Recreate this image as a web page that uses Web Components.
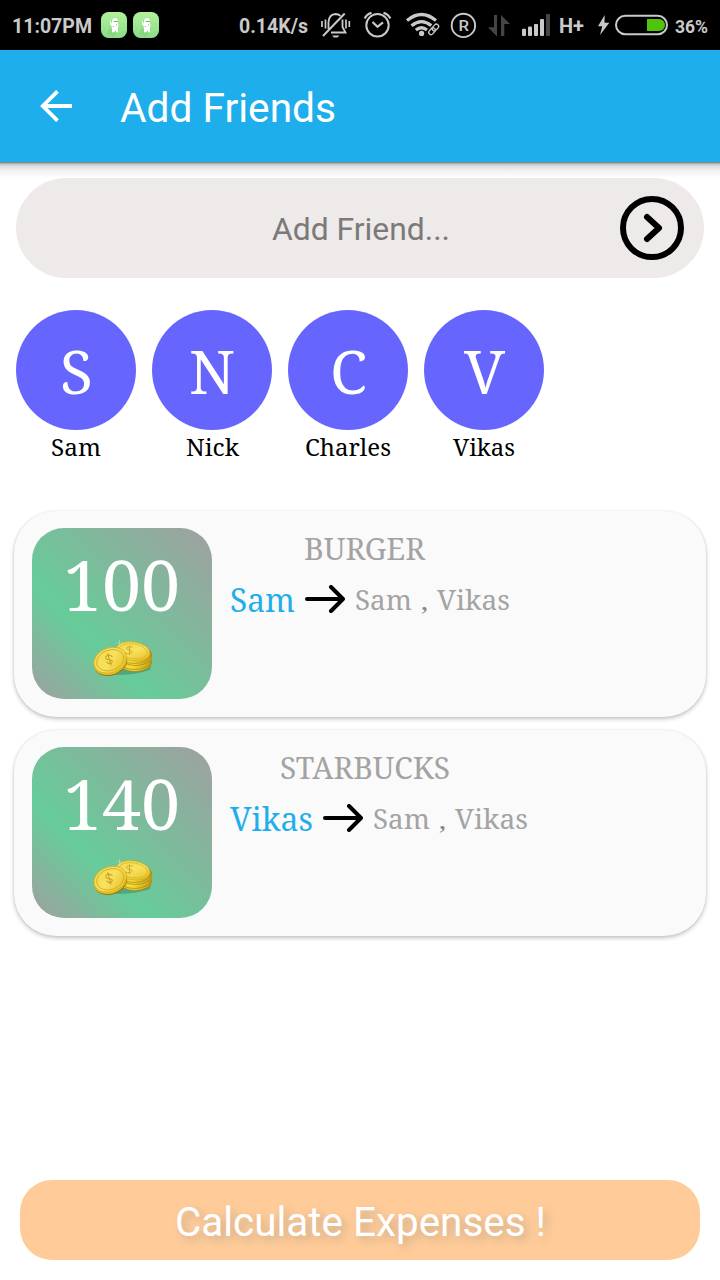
<!DOCTYPE html>
<html lang="en">
<head>
<meta charset="utf-8">
<title>Add Friends</title>
<style>
html,body{margin:0;padding:0;background:#fff}
body{width:720px;height:1280px;overflow:hidden;font-family:Roboto,sans-serif}
</style>
</head>
<body>
<expense-app></expense-app>
<script>
const define=(name,render)=>customElements.define(name,class extends HTMLElement{
  connectedCallback(){
    if(this.shadowRoot)return;
    this.attachShadow({mode:'open'}).innerHTML=render(k=>this.getAttribute(k)||'');
  }
});

/* One line of text set to a given advance width; "base" is the baseline from the top of the box. */
define('fit-text',a=>{
  const serif=a('face')==='serif';
  return `<style>:host{display:block;flex:none;width:${a('w')}px;height:${a('h')}px}svg{display:block;overflow:visible}
  text{font-family:${serif?'"Noto Serif","DejaVu Serif Condensed","DejaVu Serif",serif':'Roboto,sans-serif'};font-stretch:${serif?'condensed':'normal'};font-size:${a('size')}px;font-weight:${a('weight')||400};fill:currentColor}</style>
  <svg width="${a('w')}" height="${a('h')}"><text x="0" y="${a('base')}" textLength="${a('w')}" lengthAdjust="spacingAndGlyphs">${a('text')}</text></svg>`});

const ghost=x=>`<rect x="${x}" y="12" width="26" height="26" rx="7.5" fill="url(#g)"/>
<path d="M${x+9} 27L${x+13} 20L${x+17} 26L${x+16} 33L${x+12} 37L${x+6} 34Z" fill="#7fc777" opacity=".5"/>
<path d="M${x+11} 22v-1.500q.5-2.500 3-2.500q2.500 0 3 3v2.500q.8 1.500 0 3.500v5.300h-2v-1.500h-1.300v1.500h-2.700v-3.500q-.8-1-.5-3l-1.500-1.500v-3l1 .2v1.500h1z" fill="#fff"/>
<path d="M${x+12.500} 21.500h4.500M${x+12} 26.500h1M${x+15} 25h1" stroke="#72bd76" fill="none" stroke-width="1.100"/>`;

define('status-bar',()=>`<style>
:host{display:flex;height:50px;background:#000;color:#cacaca;padding-left:12px;box-sizing:border-box}
svg{display:block;flex:none}
</style>
<fit-text w="80" h="50" base="33" size="20" weight="700" text="11:07PM"></fit-text>
<svg width="147" height="50" viewBox="92 0 147 50"><defs><linearGradient id="g" x2="0" y2="1"><stop stop-color="#b5ef9b"/><stop offset="1" stop-color="#8ade88"/></linearGradient></defs>${ghost(101)}${ghost(133)}</svg>
<fit-text w="69" h="50" base="33" size="20" weight="700" text="0.14K/s"></fit-text>
<svg width="251" height="50" viewBox="308 0 251 50" fill="none" stroke="#cacaca" stroke-width="2">
 <path d="M328.500 29V22Q329 14.500 335.500 14Q338.500 14 340.500 15.800M342.500 19.500V27L345.500 32.500H331" stroke-width="1.800"/>
 <path d="M323 36L344.700 13.500" stroke-width="2"/><path d="M332 35.500h7.500l-2 2h-3.500z" fill="#cacaca" stroke="none"/>
 <path d="M322 21v6M325.500 19.500v9M346 19.500v9M349.300 21v6" stroke-width="1.700"/>
 <circle cx="377.500" cy="25.300" r="11.200"/><path d="M372.500 22l5 4.800l5.500-4.500" stroke-width="2.200"/>
 <path d="M364.700 18.500Q366.500 14.500 371.500 12.800M383.500 12.800Q388.500 14.500 390.300 18.500" stroke-width="2.200"/>
 <g stroke-width="3.200"><path d="M407 20.500Q421.500 8.500 436 20.500"/><path d="M411.500 25.700Q421.500 17.500 431.500 25.700"/><path d="M415.800 30Q421.500 25.500 427 30"/></g>
 <circle cx="421.600" cy="33.400" r="2.600" fill="#cacaca" stroke="none"/>
 <g transform="rotate(-48 433.500 29.500)" stroke="#000" stroke-width="4"><rect x="427.500" y="27.300" width="7.500" height="4.500" rx="2.200"/><rect x="432.500" y="27.300" width="7.500" height="4.500" rx="2.200"/></g>
 <g transform="rotate(-48 433.500 29.500)" stroke-width="1.300"><rect x="427.500" y="27.300" width="7.500" height="4.500" rx="2.200"/><rect x="432.500" y="27.300" width="7.500" height="4.500" rx="2.200"/></g>
 <circle cx="463.400" cy="25.400" r="11.700" stroke-width="1.900"/>
 <text x="458.500" y="31" textLength="10.500" lengthAdjust="spacingAndGlyphs" fill="#cacaca" stroke="none" font-family="Roboto,sans-serif" font-size="15.500" font-weight="500">R</text>
 <path d="M494 15h3v21.500L488 27.300h6zM501 36V15l9 9h-5.700v12z" fill="#454545" stroke="none"/>
 <g fill="#cacaca" stroke="none"><rect x="522" y="28.700" width="4" height="7.300" rx="1"/><rect x="528" y="26.500" width="4" height="9.500" rx="1"/><rect x="534" y="24" width="4" height="12" rx="1"/><rect x="540" y="19" width="4" height="17" rx="1"/><rect x="546" y="14" width="4" height="22" rx="1" fill="#454545"/></g>
</svg>
<fit-text w="25" h="50" base="33" size="20" weight="700" text="H+"></fit-text>
<svg width="91" height="50" viewBox="584 0 91 50"><path d="M604.700 15l-6.700 11.200h4.300l-2.300 8.800l9.300-12.200h-4.800z" fill="#cacaca"/><rect x="616" y="15.700" width="51" height="18.600" rx="9.300" fill="none" stroke="#cacaca" stroke-width="2"/><path d="M647 19h12a6 6 0 0 1 0 12h-12z" fill="#4fc40a"/></svg>
<fit-text w="33" h="50" base="32.500" size="19" weight="700" text="36%"></fit-text>`);

define('app-header',()=>`<style>
:host{display:flex;position:relative;height:112px;background:#1eaeec;color:#fff;padding-left:40px;box-sizing:border-box}
:host::after{content:"";position:absolute;left:0;right:0;top:112px;height:16px;background:linear-gradient(#777 0,#999 1px,#c4c4c4 2px,#dedede 4px,#f3f3f3 9px,#fff)}
svg{display:block;flex:none;margin:40px 48px 0 0}
</style>
<svg width="32" height="32" viewBox="40 90 32 32" fill="none" stroke="#fff" stroke-width="3.800"><path d="M72 106H43M57.500 91.300L42.800 106L57.500 120.700"/></svg>
<fit-text w="216" h="112" base="72" size="40" text="Add Friends"></fit-text>`);

define('friend-input',()=>`<style>
:host{display:flex;position:relative;height:100px;margin:16px 16px 0;border-radius:50px;background:#edeae9;color:#7b7979;padding-left:256px;box-sizing:border-box}
svg{display:block;flex:none;margin:18px 0 0 170px}
</style>
<fit-text w="178" h="100" base="62" size="32" text="Add Friend..."></fit-text>
<svg width="64" height="64" fill="none" stroke="#000" stroke-width="6"><circle cx="32" cy="32" r="29"/><path d="M27 21L39 32L27 43" stroke-linecap="round" stroke-linejoin="round"/></svg>`);

define('friend-avatar',a=>`<style>
:host{display:flex;flex-direction:column;align-items:center;width:120px}
div{display:flex;justify-content:center;width:120px;height:120px;border-radius:50%;background:#66f;color:#fff}
.name{color:#000}
</style>
<div><fit-text face="serif" w="${a('iw')}" h="120" base="84" size="60" text="${a('name')[0]}"></fit-text></div>
<fit-text class="name" face="serif" w="${a('nw')}" h="36" base="26" size="24" text="${a('name')}"></fit-text>`);

define('coin-stack',()=>`<style>:host{display:block;width:60px;height:36px}svg{display:block;overflow:visible}</style>
<svg width="60" height="36" viewBox="-1 1 60 36"><defs>
<linearGradient id="f" x2="1" y2="1"><stop stop-color="#f2d94a"/><stop offset=".5" stop-color="#f8e15e"/><stop offset="1" stop-color="#e3bb1d"/></linearGradient>
<linearGradient id="e"><stop stop-color="#e9c526"/><stop offset=".4" stop-color="#f4dc3c"/><stop offset="1" stop-color="#c9a312"/></linearGradient></defs>
<path d="M17 33Q35 36 57 29L58 24L20 27Z" fill="#25543d" opacity=".3"/>
<g fill="url(#e)" stroke="#a98309" stroke-width=".7"><ellipse cx="42" cy="21.500" rx="16.500" ry="9"/><ellipse cx="41.500" cy="19.500" rx="16.500" ry="9"/><ellipse cx="42.500" cy="15" rx="16.500" ry="9.500"/><ellipse cx="41.500" cy="13" rx="16.500" ry="9.500"/></g>
<g transform="rotate(8 40 10)"><ellipse cx="40" cy="10.300" rx="17" ry="9.500" fill="url(#f)" stroke="#cda51c" stroke-width=".6"/><ellipse cx="40" cy="10.300" rx="14.500" ry="7.500" fill="none" stroke="#d4b029" stroke-width=".7"/></g>
<path d="M39.500 6.300Q35 4.500 33.500 7.200Q33.500 9.200 37 9.500Q41 10.500 37.500 12.500Q35 13.500 32.500 12M36.500 4.500V14" fill="none" stroke="#cfab2b" stroke-width="1"/>
<g transform="rotate(-20 17.500 20)"><ellipse cx="17" cy="21.800" rx="17" ry="12.600" fill="#967607"/><ellipse cx="17" cy="20.700" rx="17" ry="12.600" fill="#e6c320"/><ellipse cx="17.500" cy="19.200" rx="16.800" ry="12.400" fill="url(#f)" stroke="#cda51c" stroke-width=".6"/><ellipse cx="17.500" cy="19.200" rx="14" ry="10.200" fill="none" stroke="#d0aa23" stroke-width=".8"/></g>
<path d="M19.500 15.700Q15 12.500 13 15.700Q12 18.500 16 18.700Q21 19.500 18.500 22Q16 24 13.500 20.700M14.700 12.500L18 24.500" fill="none" stroke="#c8a224" stroke-width="1.100"/>
<path d="M26.500-1v6M23.500 2h6" stroke="#fffbd0" stroke-width=".6" opacity=".55"/></svg>`);

define('expense-card',a=>`<style>
:host{display:flex;box-sizing:border-box;width:692px;height:206px;margin:0 0 13px 14px;padding:17px 18px;border-radius:42px;background:#fafafa;box-shadow:0 2px 4px rgba(0,0,0,.24),0 0 2px rgba(0,0,0,.08);color:#a3a3a3}
.tile{display:flex;flex-direction:column;align-items:center;flex:none;width:180px;height:171px;border-radius:32px;background:linear-gradient(45deg,#a0a0a0 0,#66cc99 33%,#a0a0a0 100%);color:#fff}
.tile fit-text{margin-right:2px}
.info{margin-left:18px}
.title{display:flex;justify-content:center;width:269px;height:46px}
.row{display:flex;height:60px}
.payer{color:#1eaeec}
svg{display:block;flex:none;margin:11px 10px 0}
coin-stack{margin-top:3px}
</style>
<div class="tile"><fit-text face="serif" w="117" h="111" base="83" size="70" text="${a('amount')}"></fit-text><coin-stack></coin-stack></div>
<div class="info">
<div class="title"><fit-text face="serif" w="${a('tw')}" h="46" base="32" size="30" text="${a('item')}"></fit-text></div>
<div class="row"><fit-text class="payer" face="serif" w="${a('pw')}" h="60" base="38" size="32" text="${a('payer')}"></fit-text>
<svg width="40" height="28" fill="none" stroke="#000" stroke-width="4" stroke-linecap="round" stroke-linejoin="round"><path d="M2 14H38M26 2L38 14L26 26"/></svg>
<fit-text face="serif" w="57" h="60" base="36" size="28" text="Sam"></fit-text>
<fit-text style="margin:0 9px 0 9px;color:#858585" face="serif" w="7" h="60" base="36" size="24" text=","></fit-text>
<fit-text face="serif" w="73" h="60" base="36" size="28" text="Vikas"></fit-text></div>
</div>`);

define('calculate-button',()=>`<style>
:host{display:flex;justify-content:center;height:80px;margin:0 20px 20px;border-radius:32px;background:#fc9;color:#fff;text-shadow:4px 4px 8px rgba(120,120,120,.4);box-sizing:border-box}
</style><fit-text w="371" h="80" base="56" size="40" text="Calculate Expenses !"></fit-text>`);

define('expense-app',()=>`<style>
:host{display:flex;flex-direction:column;width:720px;height:1280px;background:#fff}
.friends{display:flex;gap:16px;padding:32px 16px 0;height:168px}
.cards{flex:1;padding-top:33px}
</style>
<status-bar></status-bar><app-header></app-header><friend-input></friend-input>
<div class="friends"><friend-avatar name="Sam" iw="33" nw="50"></friend-avatar><friend-avatar name="Nick" iw="46" nw="53"></friend-avatar><friend-avatar name="Charles" iw="37" nw="86"></friend-avatar><friend-avatar name="Vikas" iw="41" nw="62"></friend-avatar></div>
<div class="cards"><expense-card amount="100" item="BURGER" tw="121" payer="Sam" pw="65"></expense-card><expense-card amount="140" item="STARBUCKS" tw="170" payer="Vikas" pw="83"></expense-card></div>
<calculate-button></calculate-button>`);
</script>
</body>
</html>
